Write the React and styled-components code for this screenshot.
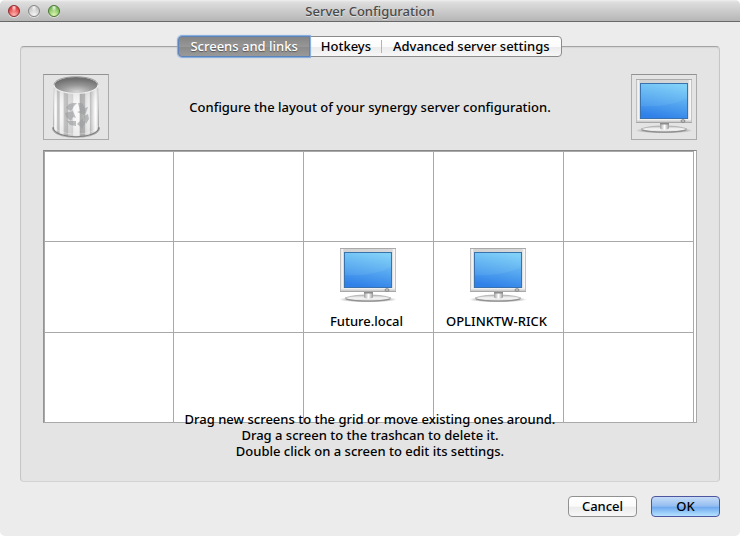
import React, { useState } from "react";
import styled, { createGlobalStyle, css } from "styled-components";

const GlobalStyle = createGlobalStyle`
  * { box-sizing: border-box; }
  body { margin: 0; background: #fff; }
  body, button { font-family: "Noto Sans", "Open Sans", sans-serif; font-size: 13px; font-weight: 500; color: #000; }
`;

const Window = styled.div`
  display: flex;
  flex-direction: column;
  min-height: 100vh;
  background: #ececec;
  border-radius: 5px;
  overflow: hidden;
`;

const TitleBar = styled.header`
  display: grid;
  grid-template-columns: 1fr auto 1fr;
  align-items: center;
  height: 22px;
  padding: 0 8px;
  border-bottom: 1px solid #686868;
  background: linear-gradient(#f0f0f0, #dedede 2px, #b6b6b6);
`;

const Title = styled.h1`
  margin: 0;
  font-size: 13px;
  font-weight: 500;
  line-height: 20px;
  color: #4a4a4a;
  text-shadow: 0 1px 0 rgba(255, 255, 255, 0.5);
`;

const Lights = styled.div`
  display: flex;
  gap: 8px;
`;

const tones = {
  red: ["#ffb9b5", "#e0383a", "#8c2a2b"],
  grey: ["#f6f6f6", "#c4c4c4", "#858585"],
  green: ["#dcf8b4", "#77b955", "#48762f"],
};

const Light = styled.button`
  width: 12px;
  height: 12px;
  padding: 0;
  border: 1px solid ${({ $tone }) => tones[$tone][2]};
  border-radius: 50%;
  background:
    radial-gradient(ellipse at 50% 12%, rgba(255, 255, 255, 0.9), transparent 38%),
    radial-gradient(circle at 50% 90%, ${({ $tone }) => tones[$tone][0]}, ${({ $tone }) => tones[$tone][1]} 75%);
  box-shadow: 0 1px 0 rgba(255, 255, 255, 0.5);
`;

const Content = styled.main`
  display: flex;
  flex-direction: column;
  flex: 1;
  padding: 14px 20px 19px;
`;

const TabBar = styled.div`
  display: flex;
  align-self: center;
  height: 21px;
  margin-bottom: -11px;
  z-index: 1;
  border: 1px solid #8b8b8b;
  border-radius: 4px;
  background: linear-gradient(#fff, #fbfbfb 50%, #ececec 55%, #f7f7f7);
`;

const Tab = styled.button`
  display: flex;
  align-items: center;
  justify-content: center;
  padding: 0 11px 1px;
  border: 0;
  background: none;
  line-height: 18px;
  white-space: nowrap;

  & + & {
    background: linear-gradient(#b4b4b4, #b4b4b4) right 3px / 1px 13px no-repeat;
  }
  &:last-child { background: none; }

  ${({ $active }) => $active && css`
    margin: -1px 0 -1px -1px;
    border: 1px solid #5b84bd;
    border-radius: 4px 0 0 4px;
    background: linear-gradient(#858585, #979797 50%, #8b8b8b 55%, #999);
    box-shadow: 0 0 1px 1px #80a9dd;
    color: #fff;
    text-shadow: 0 1px 1px #555;
  `}
`;

const Panel = styled.section`
  flex: 1;
  padding: 27px 22px 20px;
  border: 1px solid #c6c6c6;
  border-top-color: #a4a4a4;
  border-bottom-color: #d3d3d3;
  border-radius: 4px;
  background: #e4e4e4;
  box-shadow: inset 0 1px 1px #d4d4d4;
`;

const Toolbar = styled.div`
  display: flex;
  align-items: center;
  justify-content: space-between;
  margin-bottom: 10px;
`;

const Well = styled.div`
  width: 66px;
  height: 66px;
  border: 1px solid #ababab;
  border-top-color: #929292;
`;

const Icon = styled.svg`
  display: block;
  width: 64px;
  height: 64px;
  margin: 0 auto;
`;

const Message = styled.p`
  margin: 0;
  line-height: 16px;
  text-align: center;
`;

const GridFrame = styled.div`
  padding: 0 2px 0 0;
  border: 1px solid #a9a9a9;
  border-top-color: #878787;
  border-left-color: #939393;
  background: #fff;
`;

const ScreenGrid = styled.table`
  width: 100%;
  table-layout: fixed;
  border-spacing: 0;
  box-shadow: inset 1px 1px 0 #a9a9a9;
`;

const Cell = styled.td`
  height: ${({ $last }) => ($last ? 89 : 91)}px;
  padding: 2px 2px 0 0;
  border-right: 1px solid #a9a9a9;
  border-bottom: ${({ $last }) => ($last ? 0 : 1)}px solid #a9a9a9;
  vertical-align: top;
  text-align: center;
`;

const ScreenName = styled.div`
  padding-right: 2px;
  margin-top: 5px;
  line-height: 16px;
`;

const Hints = styled.div`
  position: relative;
  margin-top: -12px;
`;

const Actions = styled.footer`
  display: flex;
  justify-content: flex-end;
  gap: 14px;
  margin-top: 14px;
`;

const PushButton = styled.button`
  width: 69px;
  height: 21px;
  padding: 0 0 1px;
  border: 1px solid ${({ $primary }) => ($primary ? "#5055a0" : "#919191")};
  border-radius: 4px;
  background: ${({ $primary }) =>
    $primary
      ? "linear-gradient(#c6dcf6, #94bdf1 48%, #6fa9ef 54%, #b5e3ff)"
      : "linear-gradient(#fff, #fbfbfb 48%, #ececec 54%, #f7f7f7)"};
  line-height: 18px;
`;

function MonitorIcon({ id }) {
  return (
    <Icon viewBox="0 0 64 64" aria-hidden="true">
      <defs>
        <linearGradient id={`${id}-case`} x1="0" x2="1">
          <stop offset="0" stopColor="#aaa" />
          <stop offset=".035" stopColor="#fff" />
          <stop offset=".07" stopColor="#d2d2d2" />
          <stop offset=".93" stopColor="#d8d8d8" />
          <stop offset=".97" stopColor="#fff" />
          <stop offset="1" stopColor="#aaa" />
        </linearGradient>
        <linearGradient id={`${id}-screen`} x1=".65" y1="0" x2=".4" y2="1">
          <stop offset="0" stopColor="#7bcdf7" />
          <stop offset="1" stopColor="#2f80e8" />
        </linearGradient>
        <linearGradient id={`${id}-stem`} x1="0" x2="1">
          <stop offset="0" stopColor="#a0a0a0" />
          <stop offset=".5" stopColor="#fff" />
          <stop offset="1" stopColor="#999" />
        </linearGradient>
        <linearGradient id={`${id}-chin`} x1="0" y1="0" x2="0" y2="1">
          <stop offset="0" stopColor="#f8f8f8" />
          <stop offset="1" stopColor="#c6c6c6" />
        </linearGradient>
        <linearGradient id={`${id}-base`} x1="0" y1="0" x2="0" y2="1">
          <stop offset="0" stopColor="#bdbdbd" />
          <stop offset=".5" stopColor="#f6f6f6" />
          <stop offset="1" stopColor="#dadada" />
        </linearGradient>
        <radialGradient id={`${id}-shade`}>
          <stop offset="0" stopColor="#555" stopOpacity=".7" />
          <stop offset=".7" stopColor="#666" stopOpacity=".45" />
          <stop offset="1" stopColor="#777" stopOpacity="0" />
        </radialGradient>
      </defs>
      <ellipse cx="32" cy="55.500" rx="29" ry="3" fill={`url(#${id}-shade)`} />
      <path d="M9 54c5-2 13-3 23-3s18 1 23 3c-3 2-12 3-23 3S12 56 9 54z" fill={`url(#${id}-base)`} stroke="#999" strokeWidth=".6" />
      <path d="M10 55c8 2.700 36 2.700 44 0" fill="none" stroke="#858585" strokeWidth=".8" />
      <path d="M28 48h9v5c0 2-9 2-9 0z" fill={`url(#${id}-stem)`} />
      <path d="M28 48h9v1.500h-9z" fill="#8b8b8b" />
      <path d="M4 4h56v44H4z" fill={`url(#${id}-case)`} />
      <path d="M4 4h56v1H4z" fill="#aaa" />
      <path d="M5 44h54v3H5z" fill={`url(#${id}-chin)`} />
      <path d="M4 47h56v1H4z" fill="#a8a8a8" />
      <path d="M8 8h48v36H8z" fill="#3972ad" />
      <path d="M9 9h46v34H9z" fill={`url(#${id}-screen)`} />
      <path d="M9 9h46v14C44 29 28 32 9 31z" fill="#b5efff" opacity=".1" />
      <ellipse cx="51" cy="46" rx="2" ry="1.300" fill="#ccc" stroke="#777" strokeWidth=".8" />
    </Icon>
  );
}

function TrashIcon() {
  return (
    <Icon viewBox="0 0 64 64" aria-hidden="true">
      <defs>
        <linearGradient id="trash-body" x1="0" x2="1">
          <stop offset="0" stopColor="#999" />
          <stop offset=".04" stopColor="#fff" />
          <stop offset=".09" stopColor="#eee" />
          <stop offset=".1" stopColor="#bbb" />
          <stop offset=".14" stopColor="#ccc" />
          <stop offset=".15" stopColor="#f7f7f7" />
          <stop offset=".22" stopColor="#f4f4f4" />
          <stop offset=".24" stopColor="#c4c4c4" />
          <stop offset=".32" stopColor="#b8b8b8" />
          <stop offset=".34" stopColor="#ddd" />
          <stop offset=".43" stopColor="#d6d6d6" />
          <stop offset=".45" stopColor="#f8f8f8" />
          <stop offset=".57" stopColor="#fafafa" />
          <stop offset=".59" stopColor="#aaa" />
          <stop offset=".69" stopColor="#b4b4b4" />
          <stop offset=".71" stopColor="#e6e6e6" />
          <stop offset=".79" stopColor="#f2f2f2" />
          <stop offset=".81" stopColor="#bcbcbc" />
          <stop offset=".86" stopColor="#ddd" />
          <stop offset=".92" stopColor="#fff" />
          <stop offset=".96" stopColor="#eee" />
          <stop offset="1" stopColor="#888" />
        </linearGradient>
        <linearGradient id="trash-glow" x1="0" y1="0" x2="0" y2="1">
          <stop offset="0" stopColor="#888" stopOpacity=".3" />
          <stop offset=".5" stopColor="#fff" stopOpacity="0" />
          <stop offset="1" stopColor="#777" stopOpacity=".15" />
        </linearGradient>
        <radialGradient id="trash-inside" cx=".52" cy=".9" r=".75">
          <stop offset="0" stopColor="#d6d6d6" />
          <stop offset=".5" stopColor="#999" />
          <stop offset="1" stopColor="#6f6f6f" />
        </radialGradient>
      </defs>
      <path d="M8 53c0 13 48 13 48 0z" fill="#777" opacity=".5" />
      <path d="M10 10L9 52c0 13 46 13 46 0L54 10z" fill="url(#trash-body)" />
      <path d="M10 10L9 52c0 13 46 13 46 0L54 10z" fill="url(#trash-glow)" />
      <path d="M9 52c0 13 46 13 46 0" fill="none" stroke="#808080" strokeWidth="1.200" />
      <path d="M10 50c1 12 43 12 44 0" fill="none" stroke="#fff" strokeWidth="1" opacity=".3" />
      <ellipse cx="32" cy="10" rx="22" ry="8.500" fill="url(#trash-inside)" stroke="#eee" strokeWidth="1.200" />
      <path d="M10 10c0-11 44-11 44 0" fill="none" stroke="#888" strokeWidth=".8" />
      <g fill="#9c9fa1" opacity=".65">
        <path d="M27 36l-5-3 3-4 4-1h4l-3 3z" />
        <path d="M34 28h4l3 5 3-1-3 8-8-3 3-1z" />
        <path d="M21 38l8-2 3 7-3-1-2 4-5-4z" />
        <path d="M24 46h8v5l-6-1-4-5z" />
        <path d="M33 49l6-6v3h3l-2 5h-1v3z" />
        <path d="M40 41l4-2 1 5-3 5-1-3z" />
      </g>
    </Icon>
  );
}

const tabs = ["Screens and links", "Hotkeys", "Advanced server settings"];
const grid = [
  ["", "", "", "", ""],
  ["", "", "Future.local", "OPLINKTW-RICK", ""],
  ["", "", "", "", ""],
];

export default function App() {
  const [active, setActive] = useState(0);
  return (
    <>
      <GlobalStyle />
      <Window>
        <TitleBar>
          <Lights>
            <Light $tone="red" aria-label="Close" />
            <Light $tone="grey" aria-label="Minimize" />
            <Light $tone="green" aria-label="Zoom" />
          </Lights>
          <Title>Server Configuration</Title>
        </TitleBar>
        <Content>
          <TabBar role="tablist">
            {tabs.map((name, i) => (
              <Tab key={name} role="tab" aria-selected={i === active} $active={i === active} onClick={() => setActive(i)}>
                {name}
              </Tab>
            ))}
          </TabBar>
          <Panel>
            <Toolbar>
              <Well><TrashIcon /></Well>
              <Message>Configure the layout of your synergy server configuration.</Message>
              <Well><MonitorIcon id="new" /></Well>
            </Toolbar>
            <GridFrame>
              <ScreenGrid>
                <tbody>
                  {grid.map((row, r) => (
                    <tr key={r}>
                      {row.map((name, c) => (
                        <Cell key={c} $last={r === grid.length - 1}>
                          {name && (
                            <>
                              <MonitorIcon id={`screen-${c}`} />
                              <ScreenName>{name}</ScreenName>
                            </>
                          )}
                        </Cell>
                      ))}
                    </tr>
                  ))}
                </tbody>
              </ScreenGrid>
            </GridFrame>
            <Hints>
              <Message>Drag new screens to the grid or move existing ones around.</Message>
              <Message>Drag a screen to the trashcan to delete it.</Message>
              <Message>Double click on a screen to edit its settings.</Message>
            </Hints>
          </Panel>
          <Actions>
            <PushButton>Cancel</PushButton>
            <PushButton $primary>OK</PushButton>
          </Actions>
        </Content>
      </Window>
    </>
  );
}
